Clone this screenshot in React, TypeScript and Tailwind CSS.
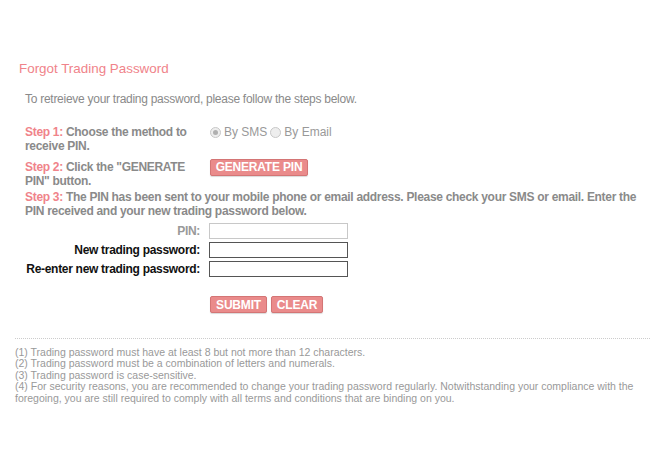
import React from "react";

const pink = "text-[#f0838a]";
const btn =
  "h-[17px] bg-[#ea8b8b] border border-[#d47575] rounded-[2px] text-white text-[12px] leading-[14px] font-bold tracking-[-0.2px] shadow-[0_1px_1px_rgba(0,0,0,0.15)]";

export default function App() {
  return (
    <div className="w-[650px] h-[462px] bg-white font-['Liberation_Sans',Arial,sans-serif] text-[#8a8a8a] overflow-hidden">
      <div className="pt-[61px] pl-[19px]">
        <h1 className={`text-[13.4px] leading-[16px] ${pink}`}>Forgot Trading Password</h1>
      </div>
      <p className="pl-[25px] mt-[15px] text-[12px] leading-[14px] tracking-[-0.27px]">
        To retreieve your trading password, please follow the steps below.
      </p>
      <div className="pl-[25px] pr-[4px] mt-[19px] text-[12px] leading-[14px] font-bold tracking-[-0.3px]">
        <div className="flex">
          <p className="w-[185px]">
            <span className={pink}>Step 1: </span>
            <span>Choose the method to receive PIN.</span>
          </p>
          <div className="flex items-center font-normal h-[14px] tracking-normal text-[#999]">
            <span className="w-[11px] h-[11px] rounded-full border border-[#c8c8c8] bg-[#eee] mr-[3px] flex items-center justify-center">
              <span className="w-[5px] h-[5px] rounded-full bg-[#b0b0b0]" />
            </span>
            <span>By SMS</span>
            <span className="inline-block w-[11px] h-[11px] rounded-full border border-[#c8c8c8] bg-[#eee] mx-[3px]" />
            <span>By Email</span>
          </div>
        </div>
        <div className="flex mt-[7px]">
          <p className="w-[185px]">
            <span className={pink}>Step 2: </span>
            <span>Click the "GENERATE PIN" button.</span>
          </p>
          <div>
            <button className={`${btn} w-[98px] mt-[-6px]`}>GENERATE PIN</button>
          </div>
        </div>
        <p className="mt-[2px]">
          <span className={pink}>Step 3: </span>
          <span>The PIN has been sent to your mobile phone or email address. Please check your SMS or email. Enter the PIN received and your new trading password below.</span>
        </p>
      </div>
      <div className="mt-[5px] flex flex-col gap-[3px] text-[12px] leading-[14px] font-bold tracking-[-0.3px]">
        <div className="flex items-center h-[16px]">
          <div className="w-[200px] text-right text-[#999]">PIN:</div>
          <input className="ml-[9px] w-[139px] h-[16px] border border-[#c8c8c8] bg-white outline-none" />
        </div>
        <div className="flex items-center h-[16px] text-[#111]">
          <div className="w-[200px] text-right">New trading password:</div>
          <input type="password" className="ml-[9px] w-[139px] h-[16px] border border-[#555] bg-white outline-none" />
        </div>
        <div className="flex items-center h-[16px] text-[#111]">
          <div className="w-[200px] text-right">Re-enter new trading password:</div>
          <input type="password" className="ml-[9px] w-[139px] h-[16px] border border-[#555] bg-white outline-none" />
        </div>
      </div>
      <div className="flex gap-[4px] pl-[210px] mt-[19px]">
        <button className={`${btn} w-[57px]`}>SUBMIT</button>
        <button className={`${btn} w-[52px]`}>CLEAR</button>
      </div>
      <div className="ml-[15px] mt-[25px] border-t border-dotted border-[#ccc]" />
      <div className="pl-[15px] pr-[4px] mt-[8px] text-[10.5px] leading-[11.4px] text-[#999]">
        <p>(1) Trading password must have at least 8 but not more than 12 characters.</p>
        <p>(2) Trading password must be a combination of letters and numerals.</p>
        <p>(3) Trading password is case-sensitive.</p>
        <p>(4) For security reasons, you are recommended to change your trading password regularly. Notwithstanding your compliance with the foregoing, you are still required to comply with all terms and conditions that are binding on you.</p>
      </div>
    </div>
  );
}
